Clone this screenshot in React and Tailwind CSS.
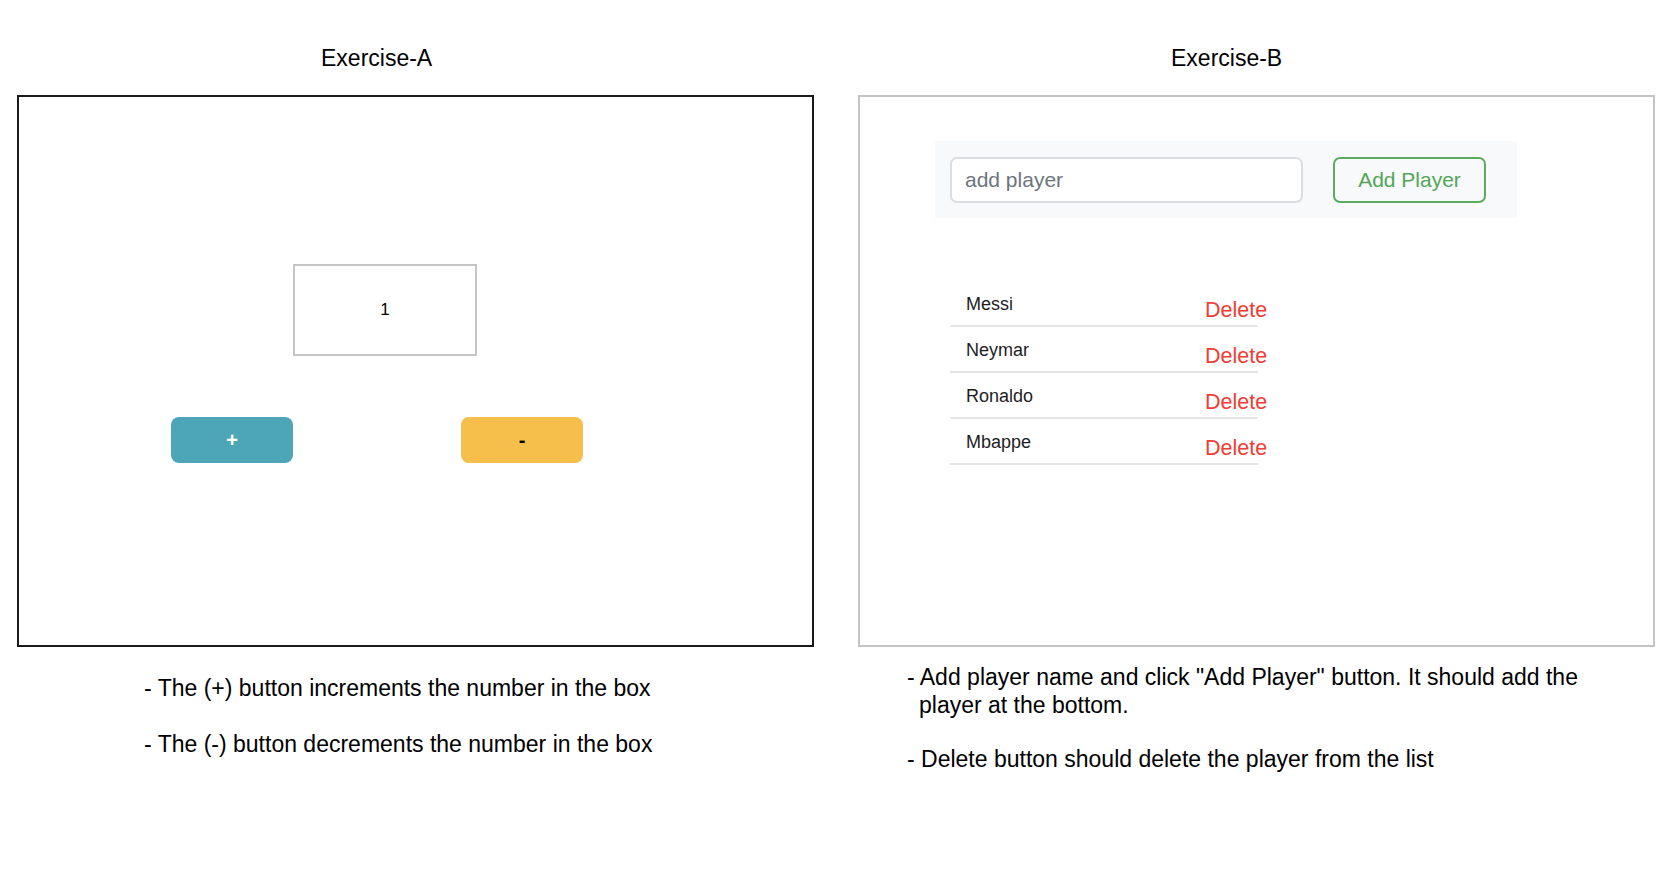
import { useState } from 'react';

function Counter() {
  const [count, setCount] = useState(1);

  return (
    <div className="flex flex-col">
      <div className="ml-[274px] mt-[167px] flex h-[92px] w-[184px] items-center justify-center border-2 border-[#c6c6c6] text-[17px] text-black">
        {count}
      </div>
      <div className="ml-[152px] mt-[61px] flex gap-[168px]">
        <button
          onClick={() => setCount((c) => c + 1)}
          className="flex h-[46px] w-[122px] items-center justify-center rounded-[8px] bg-[#4da5b8] text-[20px] font-bold text-white"
        >
          +
        </button>
        <button
          onClick={() => setCount((c) => c - 1)}
          className="flex h-[46px] w-[122px] items-center justify-center rounded-[8px] bg-[#f6be4a] text-[20px] font-bold text-black"
        >
          -
        </button>
      </div>
    </div>
  );
}

function Players() {
  const [players, setPlayers] = useState(['Messi', 'Neymar', 'Ronaldo', 'Mbappe']);
  const [name, setName] = useState('');

  const addPlayer = () => {
    if (name.trim() === '') return;
    setPlayers((prev) => [...prev, name.trim()]);
    setName('');
  };

  return (
    <div className="flex flex-col">
      {/* barra para agregar */}
      <div className="ml-[75px] mt-[44px] flex h-[77px] w-[582px] items-center bg-[#f8f9fa] pl-[15px]">
        <input
          value={name}
          onChange={(e) => setName(e.target.value)}
          onKeyDown={(e) => e.key === 'Enter' && addPlayer()}
          placeholder="add player"
          className="h-[46px] w-[353px] rounded-[7px] border-2 border-[#dcdde0] bg-white px-[13px] text-[21px] text-[#212529] placeholder-[#6c757d] outline-none"
        />
        <button
          onClick={addPlayer}
          className="ml-[30px] h-[46px] w-[153px] rounded-[7px] border-2 border-[#5dab60] text-[21px] text-[#52a656]"
        >
          Add Player
        </button>
      </div>

      {/* lista */}
      <ul className="ml-[90px] mt-[63px] flex w-[308px] flex-col">
        {players.map((p, i) => (
          <li key={i} className="flex h-[46px] border-b-2 border-[#e4e4e4]">
            <span className="w-[255px] shrink-0 pl-[16px] pt-[12px] text-[18px] leading-[22px] text-[#1d1d1f]">
              {p}
            </span>
            <button
              onClick={() => setPlayers((prev) => prev.filter((_, j) => j !== i))}
              className="mt-[16px] h-[26px] shrink-0 whitespace-nowrap text-[21.5px] leading-[26px] text-[#ef3e36]"
            >
              Delete
            </button>
          </li>
        ))}
      </ul>
    </div>
  );
}

export default function App() {
  return (
    <div className="flex h-[872px] w-[1672px] gap-[44px] bg-white px-[17px] font-['Liberation_Sans',Arial,sans-serif] text-[23px] leading-[28px] text-black">
      {/* Exercise A */}
      <div className="flex w-[797px] flex-col">
        <h2 className="pl-[304px] pt-[44px]">Exercise-A</h2>
        <div className="mt-[23px] h-[552px] border-2 border-[#1a1a1a]">
          <Counter />
        </div>
        <div className="mt-[27px] flex flex-col gap-[28px] pl-[127px]">
          <p>- The (+) button increments the number in the box</p>
          <p>- The (-) button decrements the number in the box</p>
        </div>
      </div>

      {/* Exercise B */}
      <div className="flex w-[797px] flex-col">
        <h2 className="pl-[313px] pt-[44px]">Exercise-B</h2>
        <div className="mt-[23px] h-[552px] border-2 border-[#c4c4c4]">
          <Players />
        </div>
        <div className="mt-[16px] flex flex-col gap-[26px] pl-[49px]">
          <p>
            - Add player name and click "Add Player" button. It should add the
            <br />
            <span className="pl-[12px]">player at the bottom.</span>
          </p>
          <p>- Delete button should delete the player from the list</p>
        </div>
      </div>
    </div>
  );
}
